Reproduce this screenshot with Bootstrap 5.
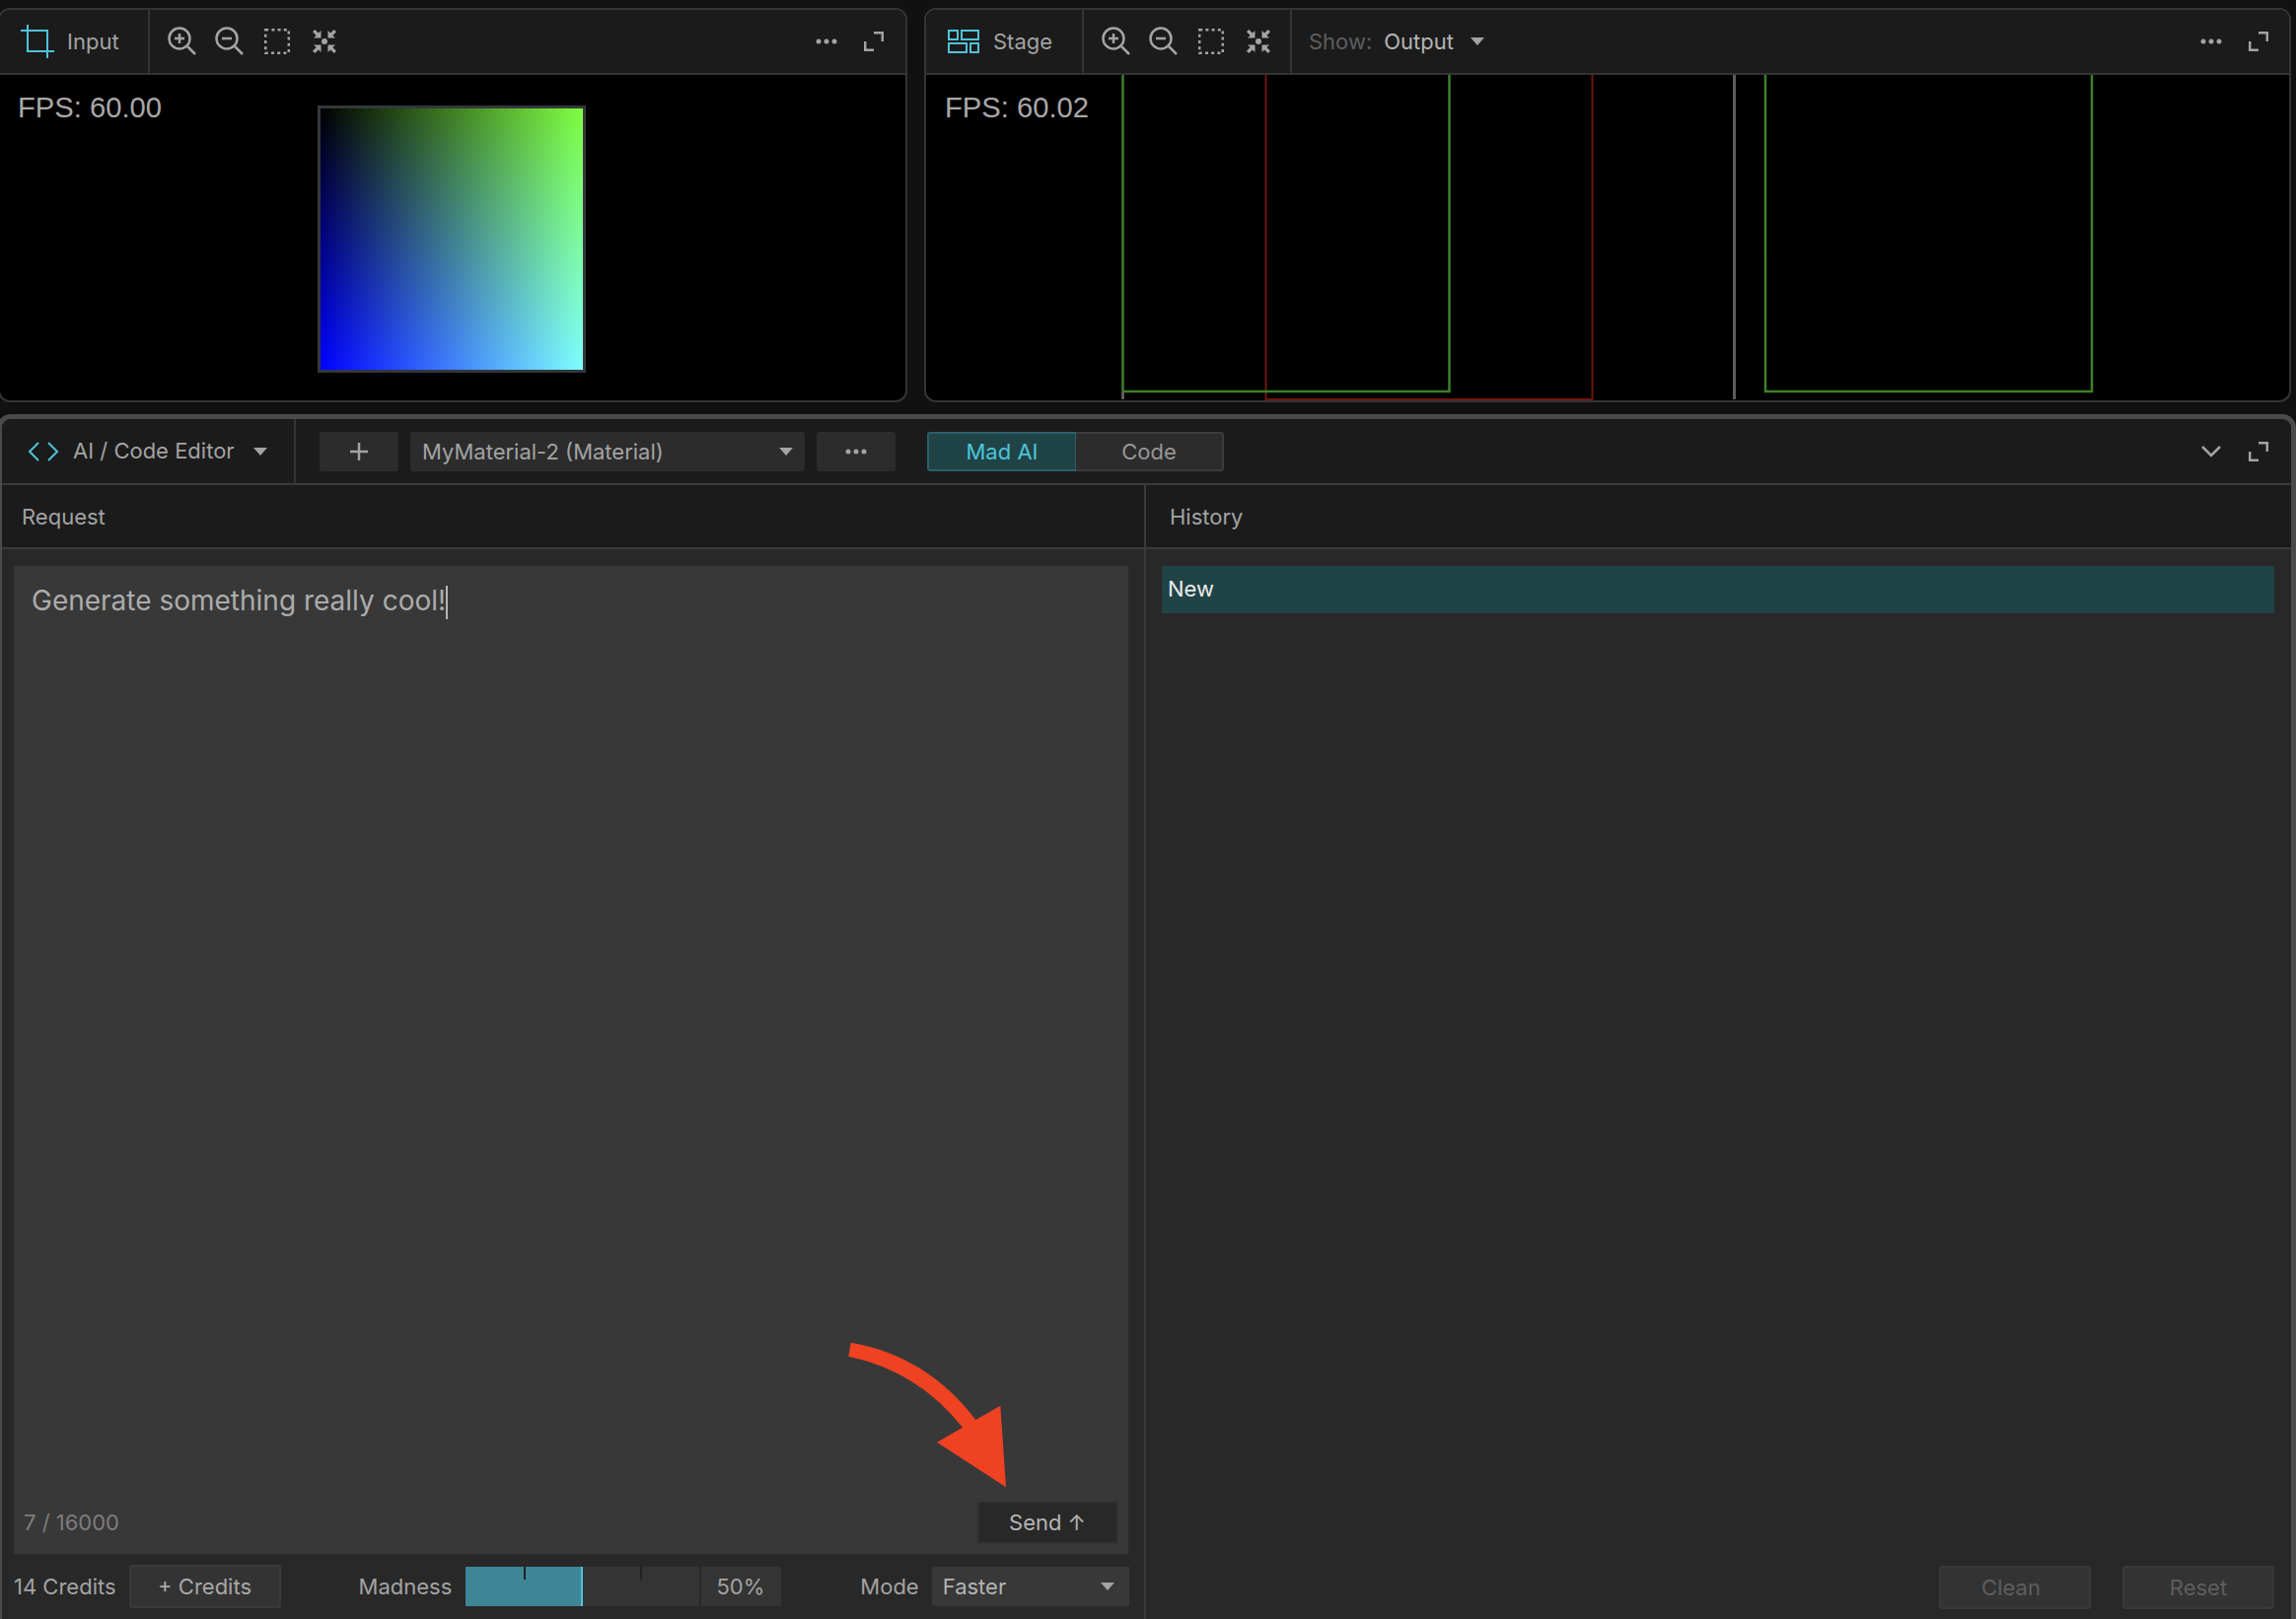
<!DOCTYPE html>
<html lang="en">
<head>
  <meta charset="UTF-8" />
  <meta name="viewport" content="width=device-width, initial-scale=1" />
  <title>AI / Code Editor</title>
  <link href="https://cdn.jsdelivr.net/npm/bootstrap@5.3.3/dist/css/bootstrap.min.css" rel="stylesheet" />
  <style>
    html, body { height: 1642px; overflow: hidden; }
    body { background: #111; color: #a3a3a3; font-family: Inter, "Liberation Sans", sans-serif; font-size: 22px; line-height: 1.2; }

    .ico { display: block; flex: none; fill: none; stroke: #a3a3a3; stroke-width: 2.5; }
    .ico-cyan { stroke: #4fc3d9; stroke-width: 2; }
    .ico-fill { fill: #a3a3a3; stroke: none; }
    .tri { width: 0; height: 0; flex: none; border-left: 7px solid transparent; border-right: 7px solid transparent; border-top: 8px solid #a3a3a3; }

    .top-row { height: 400px; margin-top: 8px; padding-right: 5px; gap: 17px; flex: none; }
    .view-panel { border: 2px solid #343434; border-radius: 12px; overflow: hidden; background: #000; }
    .view-input { width: 922px; margin-left: -2px; }
    .view-head { height: 66px; background: #1b1b1b; border-bottom: 2px solid #343434; flex: none; }
    .head-title { gap: 13px; }
    .title-input { width: 150px; padding-left: 21px; }
    .title-stage { width: 158px; padding-left: 22px; gap: 14px; }
    .head-sep { width: 2px; align-self: stretch; background: #343434; flex: none; }
    .zoom-tools { gap: 18px; margin-left: 17px; }
    .zoom-tools svg:nth-child(3) { margin-left: 3px; }
    .zoom-tools svg:nth-child(4) { margin-left: 4px; }
    .sep-show { margin-left: 19px; }
    .show-wrap { margin-left: 17px; }
    .head-end { gap: 27px; padding-right: 22px; }
    .end-stage { padding-right: 21px; }
    .view-canvas { position: relative; flex: 1; min-height: 0; }
    .view-canvas svg { display: block; width: 100%; height: 100%; }
    .fps { position: absolute; left: 18px; top: 16px; font-family: "Liberation Sans", sans-serif; font-size: 29.2px; line-height: 1.2; color: #a8a8a8; }
    .fps-stage { left: 19px; }
    .preview { position: absolute; left: 322px; top: 31px; width: 272px; height: 271px; border: 3px solid #33383c;
      background: linear-gradient(to right, #000, #7fff40), linear-gradient(to bottom, #000, #00f); background-blend-mode: screen; }
    .show-lbl { color: #5e5e5e; }
    .show-val { color: #b4b4b4; margin-left: 12px; }
    .show-tri { margin-left: 17px; }

    .editor { flex: 1; min-height: 0; margin: 12px 0 0 -3px; border: 5px solid #4a4a4a; border-bottom: 0; border-radius: 14px 14px 0 0; background: #282828; overflow: hidden; }
    .editor-head { height: 67px; flex: none; background: #1b1b1b; border-bottom: 2px solid #3a3a3a; }
    .editor-title { width: 298px; height: 100%; border-right: 2px solid #343434; padding-left: 26px; }
    .editor-name { margin-left: 14px; }
    .editor-tri { margin-left: 19px; }
    .editor-tools { margin-left: 24px; gap: 12px; }
    .tool-btn.btn { height: 40px; padding: 0 12px; font-size: 22px; line-height: 1; color: #a3a3a3; background: #2c2c2c; border: 0; border-radius: 3px; display: flex; align-items: center; }
    .mat-select { width: 400px; justify-content: space-between; }
    .square-btn { width: 80px; justify-content: center; }
    .mode-group { margin-left: 32px; }
    .mode-group .btn { height: 40px; padding: 0; font-size: 22px; line-height: 1; border-radius: 0; }
    .mode-on.btn { width: 152px; background: #204346; border: 2px solid #2b5f6b; color: #4fc3d9; border-radius: 3px 0 0 3px; }
    .mode-off.btn { width: 150px; background: #2c2c2c; border: 2px solid #3c3c3c; border-left: 0; color: #979797; border-radius: 0 3px 3px 0; }
    .editor-end { gap: 28px; padding-right: 23px; }

    .col-left { width: 1160px; flex: none; border-right: 2px solid #3a3a3a; }
    .col-title { height: 65px; flex: none; background: #1b1b1b; border-bottom: 2px solid #3a3a3a; padding-top: 2px; }
    .title-req { padding-left: 20px; }
    .title-hist { padding-left: 24px; }
    .prompt { position: relative; height: 1002px; margin: 17px 16px 0 12px; background: #383838; padding: 0 10px 10px; }
    .prompt-text { padding: 17px 8px 0; font-size: 28px; line-height: 36px; color: #acacac; }
    .caret-bar { display: inline-block; width: 2px; height: 34px; background: #b5b5b5; vertical-align: middle; }
    .char-count { color: #7d7d7d; }
    .send-btn.btn { width: 144px; height: 44px; padding: 0; font-size: 22px; line-height: 1; color: #b4b4b4; background: #282828; border: 2px solid #333; border-radius: 0; }
    .pointer-arrow { position: absolute; left: 836px; top: 776px; }

    .foot-bar { height: 66px; padding-left: 12px; }
    .foot-btn.btn { width: 154px; height: 44px; padding: 0; font-size: 22px; line-height: 1; color: #a8a8a8; background: #333; border: 2px solid #3a3a3a; border-radius: 3px; }
    .foot-btn.btn:disabled { opacity: 1; color: #5e5e5e; background: #333; border-color: #393939; }
    .foot-btn.clean-btn { padding-right: 8px; }
    .credit-btn { margin-left: 13px; }
    .madness-lbl { margin-left: 79px; }
    .madness { position: relative; width: 237px; height: 40px; margin-left: 14px; background: #343434; }
    .madness-fill { height: 100%; background: #3e8596; border-right: 2px solid #4fc3d9; }
    .madness-tick { position: absolute; top: 0; width: 2px; height: 13px; background: #222; }
    .tick-a { left: 59px; }
    .tick-b { left: 177px; }
    .pct-box { width: 81px; height: 40px; margin-left: 2px; padding-right: 2px; background: #343434; }
    .mode-lbl { margin-left: 80px; }
    .mode-select { width: 200px; height: 40px; margin-left: 13px; padding: 0 15px 0 11px; background: #383838; border-radius: 3px 0 0 3px; color: #b4b4b4; }

    .hist-col { min-width: 0; }
    .hist-row { height: 48px; margin: 17px 17px 0 16px; padding: 0 0 2px 6px; background: #204346; color: #ececec; }
    .hist-foot { gap: 32px; padding: 0 17px 10px 0; }
  </style>
</head>
<body class="d-flex flex-column">

<svg width="0" height="0" class="position-absolute">
  <symbol id="i-zoom-in" viewBox="0 0 30 30"><circle cx="13" cy="12" r="10.5"/><path d="M21 20l8 8M8 12h10M13 7v10"/></symbol>
  <symbol id="i-zoom-out" viewBox="0 0 30 30"><circle cx="13" cy="12" r="10.5"/><path d="M21 20l8 8M8 12h10"/></symbol>
  <symbol id="i-shrink" viewBox="0 0 26 26">
    <circle cx="13" cy="13" r="3" fill="#a3a3a3" stroke="none"/>
    <g fill="#a3a3a3" stroke="none">
      <path d="M9.500 9.500H2l2.600-2.600L1 3.300 3.300 1l3.600 3.600L9.500 2z"/>
      <path d="M16.500 9.500H24l-2.600-2.600L25 3.300 22.700 1l-3.600 3.600L16.500 2z"/>
      <path d="M9.500 16.500H2l2.600 2.600L1 22.700 3.300 25l3.600-3.600 2.600 2.600z"/>
      <path d="M16.500 16.500H24l-2.600 2.600 3.600 3.600-2.300 2.300-3.600-3.600-2.600 2.600z"/>
    </g>
  </symbol>
  <symbol id="i-expand" viewBox="0 0 20 20"><path d="M10 1.200h8.800V10M1.200 10v8.800H10"/></symbol>
  <symbol id="i-dots" viewBox="0 0 22 6"><circle cx="3" cy="3" r="2.500"/><circle cx="11" cy="3" r="2.500"/><circle cx="19" cy="3" r="2.500"/></symbol>
</svg>

<!-- Viewports -->
<div class="top-row d-flex">

  <div class="view-panel view-input d-flex flex-column">
    <div class="view-head d-flex align-items-center">
      <div class="head-title title-input d-flex align-items-center">
        <svg class="ico ico-cyan" width="34" height="34" viewBox="0 0 34 34"><path d="M0 6h27v28M7 0v27h27"/></svg>
        <span>Input</span>
      </div>
      <div class="head-sep"></div>
      <div class="zoom-tools d-flex align-items-center">
        <svg class="ico" width="30" height="30"><use href="#i-zoom-in"/></svg>
        <svg class="ico" width="30" height="30"><use href="#i-zoom-out"/></svg>
        <svg class="ico" width="26" height="26" viewBox="0 0 26 26"><rect x="1.200" y="1.200" width="23.600" height="23.600" stroke-dasharray="3 3.200"/></svg>
        <svg class="ico" width="26" height="26"><use href="#i-shrink"/></svg>
      </div>
      <div class="head-end ms-auto d-flex align-items-center">
        <svg class="ico ico-fill" width="22" height="6"><use href="#i-dots"/></svg>
        <svg class="ico" width="20" height="20"><use href="#i-expand"/></svg>
      </div>
    </div>
    <div class="view-canvas">
      <div class="fps">FPS: 60.00</div>
      <div class="preview"></div>
    </div>
  </div>

  <div class="view-panel flex-grow-1 d-flex flex-column">
    <div class="view-head d-flex align-items-center">
      <div class="head-title title-stage d-flex align-items-center">
        <svg class="ico ico-cyan" width="32" height="24" viewBox="0 0 32 24"><path d="M1 1h9v9H1zM14 1h17v9H14zM1 14h18v9H1zM23 14h8v9h-8z"/></svg>
        <span>Stage</span>
      </div>
      <div class="head-sep"></div>
      <div class="zoom-tools d-flex align-items-center">
        <svg class="ico" width="30" height="30"><use href="#i-zoom-in"/></svg>
        <svg class="ico" width="30" height="30"><use href="#i-zoom-out"/></svg>
        <svg class="ico" width="26" height="26" viewBox="0 0 26 26"><rect x="1.200" y="1.200" width="23.600" height="23.600" stroke-dasharray="3 3.200"/></svg>
        <svg class="ico" width="26" height="26"><use href="#i-shrink"/></svg>
      </div>
      <div class="head-sep sep-show"></div>
      <div class="show-wrap d-flex align-items-center">
        <span class="show-lbl">Show:</span>
        <span class="show-val">Output</span>
        <span class="tri show-tri"></span>
      </div>
      <div class="head-end end-stage ms-auto d-flex align-items-center">
        <svg class="ico ico-fill" width="22" height="6"><use href="#i-dots"/></svg>
        <svg class="ico" width="20" height="20"><use href="#i-expand"/></svg>
      </div>
    </div>
    <div class="view-canvas">
      <svg fill="none">
        <path d="M344.500 0V329H675.500V0" stroke="#6e1610" stroke-width="2"/>
        <path d="M199.500 0V321H530.500V0" stroke="#3e7f2a" stroke-width="2.500"/>
        <path d="M199.500 321V329" stroke="#5c5c5c" stroke-width="3"/>
        <path d="M819.500 0V329" stroke="#5c5c5c" stroke-width="3"/>
        <path d="M851 0V321H1182V0" stroke="#3e7f2a" stroke-width="2.500"/>
      </svg>
      <div class="fps fps-stage">FPS: 60.02</div>
    </div>
  </div>
</div>

<!-- Editor -->
<div class="editor d-flex flex-column">
  <div class="editor-head d-flex align-items-center">
    <div class="editor-title d-flex align-items-center">
      <svg class="ico ico-cyan" width="32" height="20" viewBox="0 0 32 20"><path d="M11 1L2 10l9 9M21 1l9 9-9 9"/></svg>
      <span class="editor-name">AI / Code Editor</span>
      <span class="tri editor-tri"></span>
    </div>
    <div class="editor-tools d-flex align-items-center">
      <button class="btn tool-btn square-btn" type="button">
        <svg class="ico" width="20" height="20" viewBox="0 0 20 20"><path d="M10 1v18M1 10h18"/></svg>
      </button>
      <div class="tool-btn btn mat-select"><span>MyMaterial-2 (Material)</span><span class="tri"></span></div>
      <button class="btn tool-btn square-btn" type="button">
        <svg class="ico ico-fill" width="22" height="6"><use href="#i-dots"/></svg>
      </button>
    </div>
    <div class="btn-group mode-group">
      <button class="btn mode-on" type="button">Mad AI</button>
      <button class="btn mode-off" type="button">Code</button>
    </div>
    <div class="editor-end ms-auto d-flex align-items-center">
      <svg class="ico" width="20" height="12" viewBox="0 0 20 12"><path d="M1 1l9 9 9-9"/></svg>
      <svg class="ico" width="20" height="20"><use href="#i-expand"/></svg>
    </div>
  </div>

  <div class="d-flex flex-grow-1">
    <div class="col-left d-flex flex-column">
      <div class="col-title title-req d-flex align-items-center">Request</div>
      <div class="prompt d-flex flex-column">
        <div class="prompt-text">Generate something really cool!<span class="caret-bar"></span></div>
        <div class="mt-auto d-flex justify-content-between align-items-center">
          <span class="char-count">7 / 16000</span>
          <button class="btn send-btn" type="button">Send ↑</button>
        </div>
        <svg class="pointer-arrow" width="180" height="170" viewBox="0 0 180 170"><path fill="#ee4223" d="M12.700 11.700Q90 25 139.300 90L164.300 75.700 170 158.300 100 112.700 126 97.700Q80 40 10.300 25.700Z"/></svg>
      </div>
      <div class="foot-bar d-flex align-items-center">
        <span>14 Credits</span>
        <button class="btn foot-btn credit-btn" type="button">+ Credits</button>
        <span class="madness-lbl">Madness</span>
        <div class="madness">
          <div class="madness-fill" style="width:50%"></div>
          <span class="madness-tick tick-a"></span>
          <span class="madness-tick tick-b"></span>
        </div>
        <div class="pct-box d-flex align-items-center justify-content-center">50%</div>
        <span class="mode-lbl">Mode</span>
        <div class="mode-select d-flex align-items-center justify-content-between"><span>Faster</span><span class="tri"></span></div>
      </div>
    </div>

    <div class="hist-col flex-grow-1 d-flex flex-column">
      <div class="col-title title-hist d-flex align-items-center">History</div>
      <div class="hist-row d-flex align-items-center">New</div>
      <div class="hist-foot mt-auto d-flex justify-content-end">
        <button class="btn foot-btn clean-btn" type="button" disabled>Clean</button>
        <button class="btn foot-btn" type="button" disabled>Reset</button>
      </div>
    </div>
  </div>
</div>

<script src="https://cdn.jsdelivr.net/npm/bootstrap@5.3.3/dist/js/bootstrap.bundle.min.js"></script>
</body>
</html>
